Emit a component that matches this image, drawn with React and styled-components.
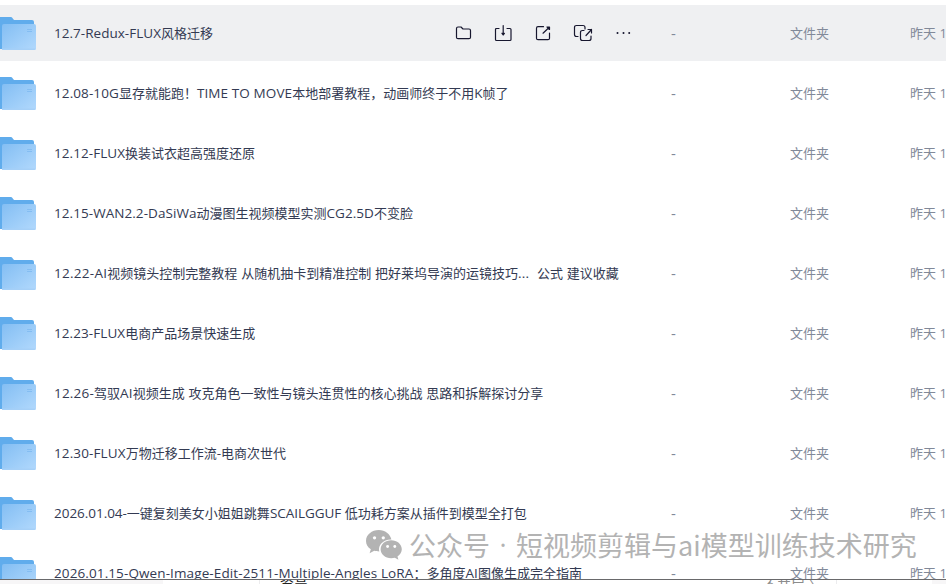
import React from "react";
import styled, { createGlobalStyle } from "styled-components";

const GlobalStyle = createGlobalStyle`
  body { margin: 0; background: #fff; overflow: hidden; }
  * { box-sizing: border-box; }
`;

const Page = styled.main`
  position: relative;
  display: flex;
  flex-direction: column;
  width: 946px;
  height: 584px;
  overflow: hidden;
  font: 13px/18px "Open Sans", "Noto Sans CJK SC", sans-serif;
`;

const FileList = styled.div`
  display: flex;
  flex-direction: column;
  gap: 4px;
  height: 579px;
  padding-top: 5px;
  overflow: hidden;
`;

const Row = styled.div`
  display: grid;
  grid-template-columns: 54px 617px 119px 120px 1fr;
  align-items: center;
  flex: none;
  height: 56px;
  white-space: nowrap;
  color: #818999;
  background: ${(p) => (p.$active ? "#eff0f2" : "#fff")};
`;

const FolderArt = styled.svg`
  display: block;
  width: 36px;
  height: 34px;
`;

const NameCell = styled.div`
  display: flex;
  align-items: center;
  justify-content: space-between;
  color: #333a52;
`;

const Name = styled.span`
  white-space: pre;
`;

const Latin = styled.span`
  font-size: 13.5px;
  line-height: 1;
  letter-spacing: ${(p) => p.$spacing}px;
`;

const Cell = styled.div`
  overflow: hidden;
`;

const SizeCell = styled(Cell)`
  font-size: 15px;
`;

const Actions = styled.div`
  display: flex;
  gap: 20px;
  padding-right: 38px;
`;

const ActionIcon = styled.svg`
  display: block;
  width: 20px;
  height: 20px;
  fill: none;
  stroke: #17172f;
  stroke-width: 1.2;
  stroke-linecap: round;
  stroke-linejoin: round;
`;

const BottomStrip = styled.div`
  display: grid;
  grid-template-columns: 163px 97px 577px 95px 1fr;
  height: 5px;
  border-top: 1px solid #69696b;
  overflow: hidden;
`;

const StripPart = styled.div`
  position: relative;
  overflow: hidden;
  background: ${(p) => (p.$shade ? "#f7f6f7" : "#fff")};
  border-right: ${(p) => (p.$edge ? "1px solid #ececee" : "none")};
`;

const Clipped = styled.span`
  position: absolute;
  left: ${(p) => p.$left}px;
  top: ${(p) => p.$top}px;
  font-size: 14px;
  line-height: 18px;
  color: ${(p) => p.$color};
  white-space: nowrap;
`;

const Watermark = styled.div`
  position: absolute;
  left: 366px;
  top: 527px;
  display: flex;
  align-items: center;
  gap: 7px;
  height: 36px;
  font: 27px/36px "Noto Sans CJK SC", sans-serif;
  color: #b3b3b3;
  white-space: nowrap;
`;

const Account = styled.span`
  display: flex;
`;

const Dot = styled.span`
  width: 26px;
  text-align: center;
  font-family: "Open Sans", sans-serif;
`;

const ChatLogo = styled.svg`
  width: 36px;
  height: 30px;
`;

const files = [
  ["12.7-Redux-FLUX风格迁移", 0.03],
  ["12.08-10G显存就能跑！TIME TO MOVE本地部署教程，动画师终于不用K帧了", 0.1],
  ["12.12-FLUX换装试衣超高强度还原", 0.06],
  ["12.15-WAN2.2-DaSiWa动漫图生视频模型实测CG2.5D不变脸", 0.06],
  ["12.22-AI视频镜头控制完整教程 从随机抽卡到精准控制 把好莱坞导演的运镜技巧...  公式 建议收藏", 0.28],
  ["12.23-FLUX电商产品场景快速生成", 0.08],
  ["12.26-驾驭AI视频生成 攻克角色一致性与镜头连贯性的核心挑战 思路和拆解探讨分享", 0.21],
  ["12.30-FLUX万物迁移工作流-电商次世代", 0.12],
  ["2026.01.04-一键复刻美女小姐姐跳舞SCAILGGUF 低功耗方案从插件到模型全打包", -0.03],
  ["2026.01.15-Qwen-Image-Edit-2511-Multiple-Angles LoRA：多角度AI图像生成完全指南", 0.11],
];

const FolderIcon = () => (
  <FolderArt viewBox="0 0 36 34">
    <defs>
      <linearGradient id="folderFront" x1="0" y1="0" x2="1" y2="1">
        <stop offset="0" stopColor="#83bef3" />
        <stop offset="1" stopColor="#b2d9fd" />
      </linearGradient>
    </defs>
    <path d="M0 1h10.5q1.500 0 2.300 1.400L14 4h18q2 0 2 2v27H0z" fill="#60acec" />
    <path d="M2 10q0-2 2-2h30q2 0 2 2v22q0 2-2 2H2z" fill="url(#folderFront)" />
    <path d="M2 32.500h34q-.3 1.500-2 1.500H2z" fill="#a5d0f8" />
    <path d="M27 13.500h5M27 15.500h5" stroke="#84bdf2" strokeWidth="1" />
  </FolderArt>
);

const icons = [
  "M3.500 5.500Q3.500 4 5 4H8l2 2h6Q17.500 6 17.500 7.500V14.200Q17.500 15.700 16 15.700H5Q3.500 15.700 3.500 14.200z",
  "M6 5.500H3.500Q2.500 5.500 2.500 6.500v10q0 1 1 1h13.500q1 0 1-1V6.500q0-1-1-1H14M10.200 2.500V11M9 10.300h2.400L10.200 12z",
  "M10.500 3.700H5Q3.500 3.700 3.500 5.200v10q0 1.500 1.500 1.500H15q1.500 0 1.500-1.500V10M10 10.200L15.500 5M14 4h2.500v2.500z",
];

const RowActions = () => (
  <Actions>
    {icons.map((d) => (
      <ActionIcon key={d} viewBox="0 0 20 20"><path d={d} /></ActionIcon>
    ))}
    <ActionIcon viewBox="0 0 20 20">
      <path d="M5 13.500H3.500Q1.500 13.500 1.500 11.500V4.500Q1.500 2.500 3.500 2.500h6.500q2 0 2 2V6M11 7.500H9.500Q7.500 7.500 7.500 9.500v6q0 2 2 2h6.500q2 0 2-2V13M13 12.500L18.500 6.500M15 6.500h3.500v3.500" />
    </ActionIcon>
    <ActionIcon viewBox="0 0 20 20">
      <path d="M4.500 10h.01M10.500 10h.01M16.200 10h.01" strokeWidth="2" />
    </ActionIcon>
  </Actions>
);

const MixedText = ({ text, spacing }) => (
  <Name>
    {text.split(/([\x20-\x7e]+)/).map((part, i) =>
      i % 2 ? <Latin key={i} $spacing={spacing}>{part}</Latin> : part
    )}
  </Name>
);

export default function App() {
  return (
    <>
      <GlobalStyle />
      <Page>
        <FileList>
          {files.map(([name, spacing], i) => (
            <Row key={name} $active={i === 0}>
              <FolderIcon />
              <NameCell>
                <MixedText text={name} spacing={spacing} />
                {i === 0 && <RowActions />}
              </NameCell>
              <SizeCell>-</SizeCell>
              <Cell>文件夹</Cell>
              <Cell>昨天 18:20</Cell>
            </Row>
          ))}
        </FileList>
        <BottomStrip>
          <StripPart $shade />
          <StripPart $edge />
          <StripPart $edge>
            <Clipped $left={20} $top={-6} $color="#222">资高</Clipped>
            <Clipped $left={503} $top={-4} $color="#8c8c8c">不共层 〉</Clipped>
          </StripPart>
          <StripPart />
          <StripPart $shade />
        </BottomStrip>
        <Watermark>
          <ChatLogo viewBox="0 0 35 29">
            <path fill="#b3b3b3" d="M12.500 0C5.600 0 0 4.700 0 10.500c0 3.300 1.800 6.200 4.700 8.100L3.500 22.500l4.500-2.300c1.400.4 2.900.6 4.900.6-1.600-6.100 4-12 11.800-11.700C23.500 3.900 18.500 0 12.500 0z" />
            <path fill="#b3b3b3" d="M24.500 10c-5.800 0-10.300 3.900-10.300 8.700s4.500 8.700 10.300 8.700c1.200 0 2.400-.2 3.500-.5l3.500 2-.9-3.300c2.600-1.600 4.200-4.100 4.200-6.900C34.800 13.900 30.200 10 24.500 10z" />
            <g fill="#fff"><circle cx="8.300" cy="7.500" r="1.600" /><circle cx="16.800" cy="7.500" r="1.600" /><circle cx="21" cy="16" r="1.400" /><circle cx="28" cy="16" r="1.400" /></g>
          </ChatLogo>
          <Account>公众号<Dot>·</Dot>短视频剪辑与ai模型训练技术研究</Account>
        </Watermark>
      </Page>
    </>
  );
}
